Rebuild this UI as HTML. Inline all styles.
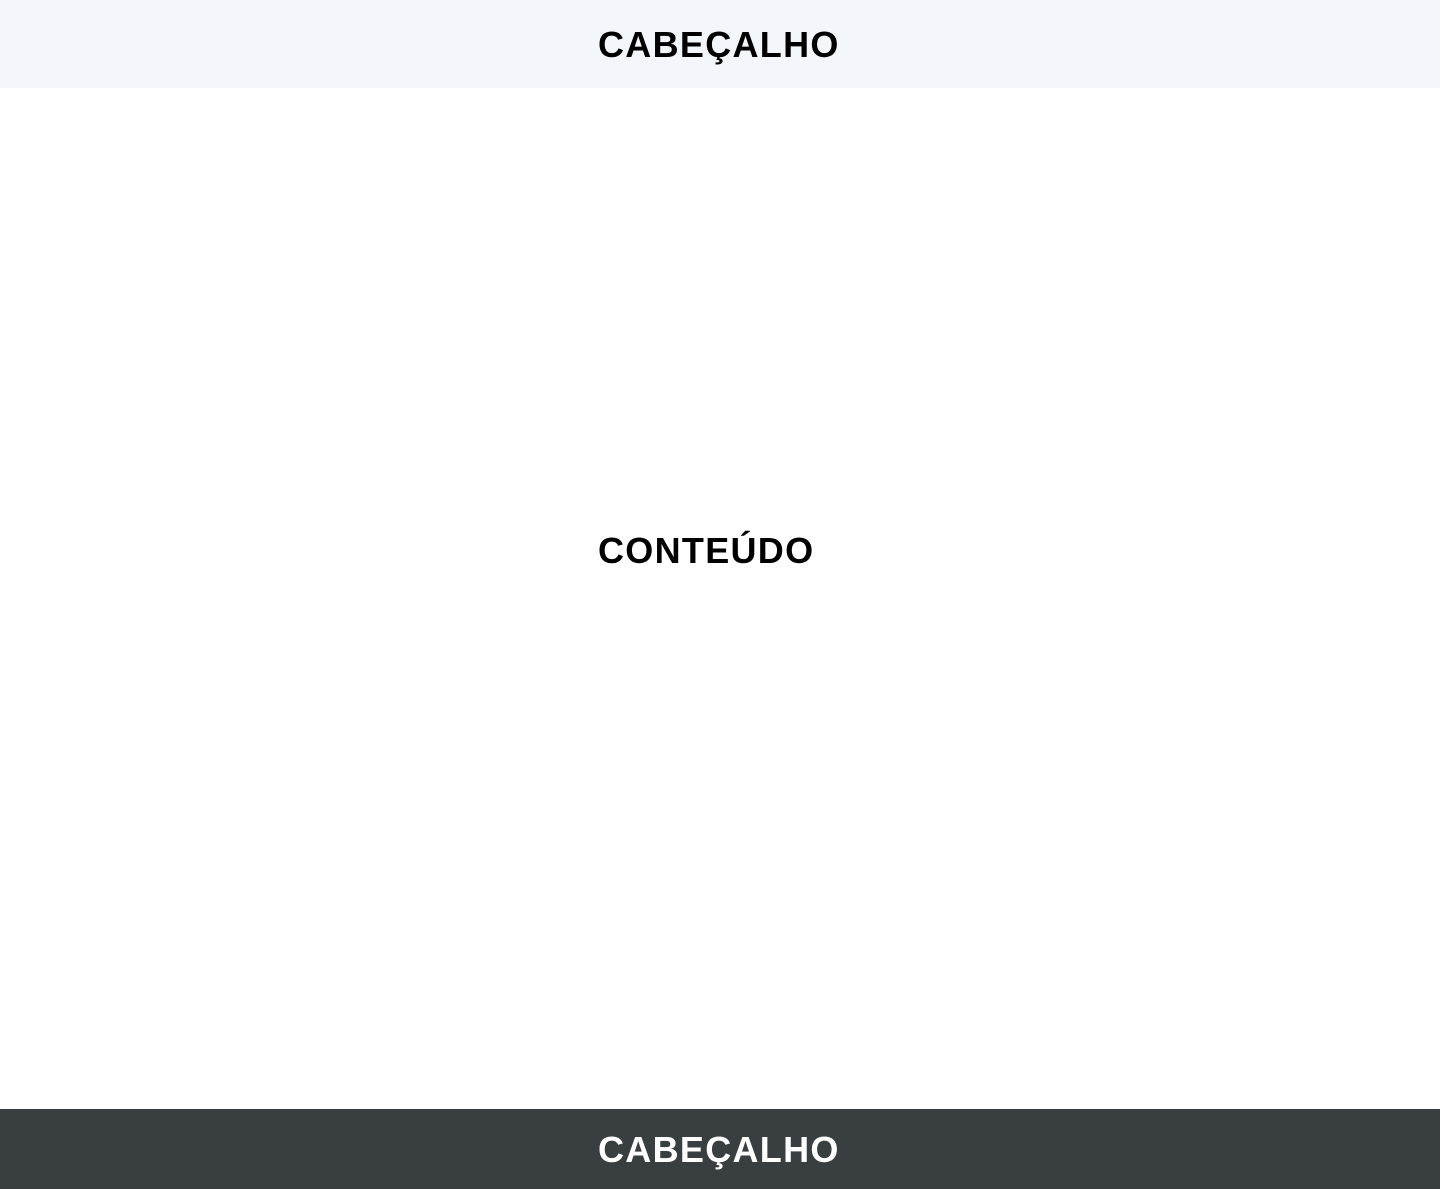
<!DOCTYPE html>
<html><head><meta charset="utf-8"><style>
html,body{margin:0;padding:0;width:1440px;height:1189px;background:#fff;overflow:hidden;font-family:"Liberation Sans",sans-serif;font-weight:bold}
.t{position:absolute;left:598px;font-size:36px;line-height:40px;white-space:nowrap;letter-spacing:1.3px}
#h{position:absolute;top:0;left:0;width:1440px;height:88px;background:#f3f6fa}
#f{position:absolute;top:1109px;left:0;width:1440px;height:80px;background:#393f41}
</style></head><body>
<div id="h"></div>
<div class="t" style="top:25px;color:#000">CABEÇALHO</div>
<div class="t" style="top:531px;color:#000">CONTEÚDO</div>
<div id="f"></div>
<div class="t" style="top:1130px;color:#fff">CABEÇALHO</div>
</body></html>
